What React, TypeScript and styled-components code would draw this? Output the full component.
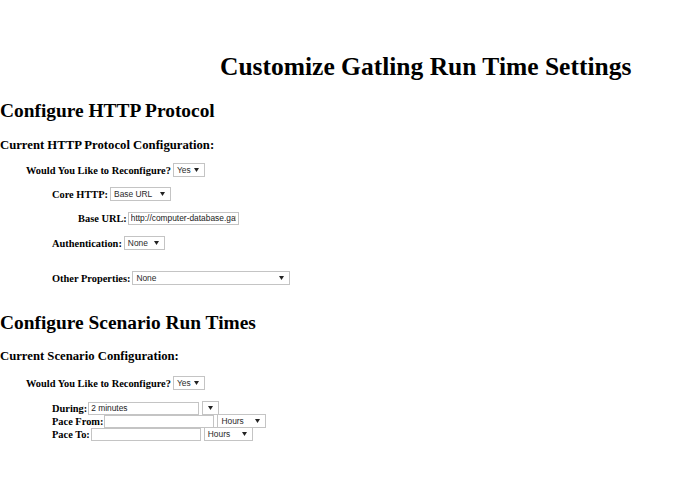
import React from "react";
import styled, { createGlobalStyle } from "styled-components";

const Global = createGlobalStyle`
  html, body { margin: 0; padding: 0; background: #fff; }
  body { font-family: "Liberation Serif", "Times New Roman", serif; color: #000; }
`;

const Page = styled.div`
  width: 695px;
  height: 494px;
  display: flex;
  flex-direction: column;
`;

const Title = styled.h1`
  margin: 52px 0 0 220px;
  font-size: 25.5px;
  font-weight: bold;
  line-height: 30px;
  white-space: nowrap;
`;

const SectionTitle = styled.h2<{ $top: number }>`
  margin: ${(p) => p.$top}px 0 0 0;
  font-size: 19.4px;
  font-weight: bold;
  line-height: 24px;
  white-space: nowrap;
`;

const SubTitle = styled.h3<{ $top: number }>`
  margin: ${(p) => p.$top}px 0 0 0;
  font-size: 12.7px;
  font-weight: bold;
  line-height: 16px;
  white-space: nowrap;
`;

const Row = styled.div<{ $indent: number; $top: number }>`
  display: flex;
  align-items: center;
  margin: ${(p) => p.$top}px 0 0 ${(p) => p.$indent}px;
  height: 14px;
`;

const Label = styled.span<{ $gap?: number }>`
  font-size: 10.4px;
  font-weight: bold;
  margin-right: ${(p) => p.$gap ?? 2}px;
  white-space: nowrap;
`;

const Box = styled.span<{ $w: number }>`
  box-sizing: border-box;
  display: inline-flex;
  align-items: center;
  justify-content: space-between;
  width: ${(p) => p.$w}px;
  height: 14px;
  border: 1px solid #c4c4c4;
  background: #fff;
  padding: 0 5px 0 3px;
  font-family: "Liberation Sans", Arial, sans-serif;
  font-size: 8.4px;
  color: #2a2a2a;
`;

const Arrow = styled.svg`
  flex: none;
`;

const TextInput = styled.input<{ $w: number }>`
  box-sizing: border-box;
  width: ${(p) => p.$w}px;
  height: 13px;
  border: 1px solid #c4c4c4;
  padding: 0 2px;
  margin: 0;
  font-family: "Liberation Sans", Arial, sans-serif;
  font-size: 8.4px;
  color: #1a1a1a;
  outline: none;
`;

const Spacer = styled.span<{ $w: number }>`
  display: inline-block;
  width: ${(p) => p.$w}px;
`;

function Select({ w, text }: { w: number; text: string }) {
  return (
    <Box $w={w}>
      <span>{text}</span>
      <Arrow width="5" height="4" viewBox="0 0 5 4">
        <path d="M0 0H5L2.5 4Z" fill="#222" />
      </Arrow>
    </Box>
  );
}

export default function App() {
  return (
    <Page>
      <Global />
      <Title>Customize Gatling Run Time Settings</Title>

      <SectionTitle $top={17}>Configure HTTP Protocol</SectionTitle>
      <SubTitle $top={14}>Current HTTP Protocol Configuration:</SubTitle>
      <Row $indent={26} $top={10}>
        <Label>Would You Like to Reconfigure?</Label>
        <Select w={32} text="Yes" />
      </Row>
      <Row $indent={52} $top={10}>
        <Label>Core HTTP:</Label>
        <Select w={61} text="Base URL" />
      </Row>
      <Row $indent={78} $top={10}>
        <Label $gap={1}>Base URL:</Label>
        <TextInput $w={111} defaultValue="http://computer-database.gatling.io" />
      </Row>
      <Row $indent={52} $top={11}>
        <Label>Authentication:</Label>
        <Select w={41} text="None" />
      </Row>
      <Row $indent={52} $top={21}>
        <Label>Other Properties:</Label>
        <Select w={158} text="None" />
      </Row>

      <SectionTitle $top={26}>Configure Scenario Run Times</SectionTitle>
      <SubTitle $top={13}>Current Scenario Configuration:</SubTitle>
      <Row $indent={26} $top={12}>
        <Label>Would You Like to Reconfigure?</Label>
        <Select w={32} text="Yes" />
      </Row>
      <Row $indent={52} $top={11}>
        <Label $gap={1}>During:</Label>
        <TextInput $w={111} defaultValue="2 minutes" />
        <Spacer $w={3} />
        <Select w={17} text="" />
      </Row>
      <Row $indent={52} $top={-1}>
        <Label $gap={1}>Pace From:</Label>
        <TextInput $w={110} defaultValue="" />
        <Spacer $w={3} />
        <Select w={49} text="Hours" />
      </Row>
      <Row $indent={52} $top={-1}>
        <Label $gap={1}>Pace To:</Label>
        <TextInput $w={110} defaultValue="" />
        <Spacer $w={3} />
        <Select w={49} text="Hours" />
      </Row>
    </Page>
  );
}
